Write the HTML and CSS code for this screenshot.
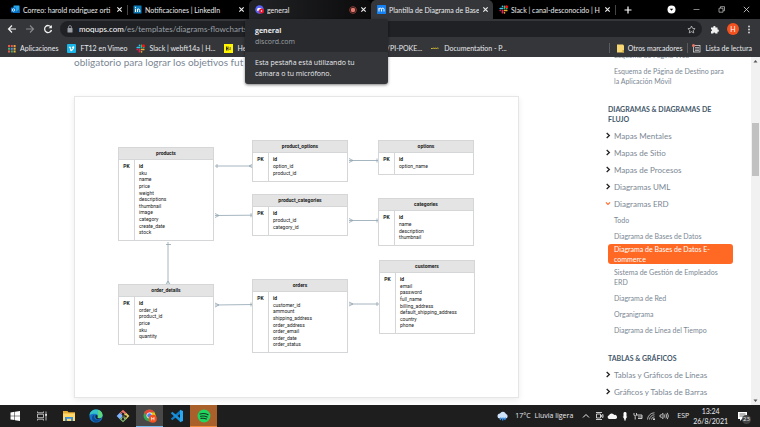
FILE: index.html
```html
<!DOCTYPE html>
<html lang="es">
<head>
<meta charset="utf-8">
<meta name="viewport" content="width=device-width, initial-scale=1">
<title>Plantilla de Diagrama de Bases de Datos</title>
<link rel="stylesheet" href="styles.css">
</head>
<body>
<svg class="defs" aria-hidden="true">
  <symbol id="slack" viewBox="0 0 18 18">
    <g fill="none" stroke-width="3.4" stroke-linecap="round">
      <path stroke="#36c5f0" d="M7 2.5v.1M2.5 7h4.5"/><path stroke="#2eb67d" d="M11 2.5V7M15.500 7h.1"/>
      <path stroke="#ecb22e" d="M11 15.500v.1M11 11h4.500"/><path stroke="#e01e5a" d="M7 11v4.500M2.500 11h.1"/>
    </g>
    <circle cx="15" cy="3.500" r="3" fill="#f11"/>
  </symbol>
  <symbol id="close" viewBox="0 0 8 8"><path d="M1.500 1.500l5 5M6.500 1.500l-5 5" stroke="#eee" stroke-width="1.300" fill="none"/></symbol>
  <symbol id="right" viewBox="0 0 6 8"><path d="M1.500 1.200L4.500 4 1.500 6.800" stroke="#222" stroke-width="1.500" fill="none"/></symbol>
  <symbol id="down" viewBox="0 0 8 6"><path d="M1.200 1.500L4 4.200 6.800 1.500" stroke="#ff6a2b" stroke-width="1.500" fill="none"/></symbol>
</svg>

<header class="browser">
  <nav class="tabs" aria-label="Pestañas">
    <div class="tab">
      <svg class="fav" viewBox="0 0 18 18"><rect x="5" y="1" width="12" height="15" rx="1" fill="#28a8ea"/><path d="M5 8l6 5 6-5v8H5z" fill="#0f6cbd"/><rect x="0" y="5" width="10" height="10" rx="1" fill="#0078d4"/><circle cx="5" cy="10" r="2.500" fill="none" stroke="#fff" stroke-width="1.600"/></svg>
      <span class="tab-title">Correo: harold rodriguez orti</span>
      <button class="icon-btn" aria-label="Cerrar"><svg class="x"><use href="#close"/></svg></button>
    </div>
    <div class="tab split">
      <svg class="fav" viewBox="0 0 18 18"><rect x="1" y="1" width="16" height="16" rx="1" fill="#0a7bb8"/><path d="M5 7.500V14M9 14V7.500M9 11c0-4 4.500-4 4.500 0v3" stroke="#fff" stroke-width="2" fill="none"/><circle cx="5" cy="4.700" r="1.300" fill="#fff"/></svg>
      <span class="tab-title">Notificaciones | LinkedIn</span>
      <button class="icon-btn" aria-label="Cerrar"><svg class="x"><use href="#close"/></svg></button>
    </div>
    <div class="tab hover">
      <svg class="fav" viewBox="0 0 18 18"><circle cx="9" cy="9" r="8.500" fill="#5865f2"/><path d="M4 12c0-4 1-6 2.500-6h5C13 6 14 8 14 12l-3-1H7z" fill="#fff"/><circle cx="13" cy="12" r="5" fill="#e8142c"/><circle cx="13" cy="12" r="1.500" fill="#fff"/></svg>
      <span class="tab-title">general</span>
      <svg class="rec" viewBox="0 0 10 10"><circle cx="5" cy="5" r="4.200" fill="none" stroke="#a9473f"/><circle cx="5" cy="5" r="2.800" fill="#e5786d"/></svg>
      <button class="icon-btn" aria-label="Cerrar"><svg class="x"><use href="#close"/></svg></button>
    </div>
    <div class="tab active">
      <svg class="fav" viewBox="0 0 18 18"><rect width="18" height="18" rx="1" fill="#1681f2"/><path d="M4 13V6M4 8.500c0-3 5-3 5 0V13M9 8.500c0-3 5-3 5 0V13" fill="none" stroke="#fff" stroke-width="2"/></svg>
      <span class="tab-title">Plantilla de Diagrama de Base</span>
      <button class="icon-btn" aria-label="Cerrar"><svg class="x"><use href="#close"/></svg></button>
    </div>
    <div class="tab">
      <svg class="fav"><use href="#slack"/></svg>
      <span class="tab-title">Slack | canal-desconocido | H</span>
      <button class="icon-btn" aria-label="Cerrar"><svg class="x"><use href="#close"/></svg></button>
    </div>
    <button class="icon-btn new-tab split" aria-label="Nueva pestaña"><svg class="plus" viewBox="0 0 8 8"><path d="M4 .5v7M.5 4h7" stroke="#fff" stroke-width="1.200"/></svg></button>
    <div class="window-controls">
      <button class="icon-btn" aria-label="Buscar pestañas"><svg class="fav" viewBox="0 0 9 9"><circle cx="4.500" cy="4.500" r="4" fill="#fff"/><path d="M2.800 3.800h3.400L4.500 5.800z" fill="#000"/></svg></button>
      <button class="icon-btn" aria-label="Minimizar"><svg class="fav" viewBox="0 0 9 9"><path d="M1.500 4.500h6" stroke="#bbb" stroke-width=".7"/></svg></button>
      <button class="icon-btn" aria-label="Restaurar"><svg class="fav" viewBox="0 0 9 9"><path d="M2 3.200h4v4H2zM3.500 3V1.700h4v4H6.200" fill="none" stroke="#ccc" stroke-width=".7"/></svg></button>
      <button class="icon-btn" aria-label="Cerrar ventana"><svg class="fav" viewBox="0 0 9 9"><path d="M1.800 1.800l5.400 5.400M7.200 1.800L1.800 7.200" stroke="#ddd" stroke-width=".8"/></svg></button>
    </div>
  </nav>

  <div class="toolbar">
    <button class="icon-btn" aria-label="Atrás"><svg class="nav-icon" viewBox="0 0 10 10"><path d="M9 5H1.500M5 1.500L1.500 5 5 8.500" fill="none" stroke="#f1f1f1" stroke-width="1.200"/></svg></button>
    <button class="icon-btn" aria-label="Adelante"><svg class="nav-icon" viewBox="0 0 10 10"><path d="M1 5h7.500M5 1.500L8.500 5 5 8.500" fill="none" stroke="#898a8d" stroke-width="1.100"/></svg></button>
    <button class="icon-btn" aria-label="Recargar"><svg class="nav-icon" viewBox="0 0 10 10"><path d="M8 3A3.500 3.500 0 1 0 8.500 6" fill="none" stroke="#f1f1f1" stroke-width="1.300"/><path d="M8.900.9v3.300H5.600z" fill="#f1f1f1"/></svg></button>
    <div class="omnibox">
      <svg class="lock" viewBox="0 0 6 8"><rect x=".5" y="3" width="5" height="4.500" rx=".6" fill="#9aa0a6"/><path d="M1.600 3V2a1.400 1.400 0 0 1 2.800 0v1" fill="none" stroke="#9aa0a6" stroke-width=".8"/></svg>
      <span class="url"><span class="host">moqups.com</span>/es/templates/diagrams-flowcharts/</span>
      <button class="icon-btn" aria-label="Añadir a marcadores"><svg class="fav" viewBox="0 0 18 18"><path d="M9 2l2.200 4.700 5 .6-3.700 3.500 1 5L9 13.300l-4.500 2.500 1-5L1.800 7.300l5-.6z" fill="none" stroke="#ccc" stroke-width="1.500"/></svg></button>
    </div>
    <button class="icon-btn" aria-label="Extensiones"><svg class="fav" viewBox="0 0 18 18"><path d="M2 5h4.500a2.300 2.300 0 1 1 4.500 0h4v4a2.300 2.300 0 1 1 0 4.500V17h-4.500a2 2 0 0 0-4 0H2v-4.500a2 2 0 0 0 0-4z" fill="#f1f1f1"/></svg></button>
    <button class="avatar" aria-label="Perfil">H</button>
    <button class="icon-btn" aria-label="Menú"><svg class="dots" viewBox="0 0 4 9"><g fill="#ddd"><circle cx="2" cy="1.500" r=".9"/><circle cx="2" cy="4.500" r=".9"/><circle cx="2" cy="7.500" r=".9"/></g></svg></button>
  </div>

  <nav class="bookmarks" aria-label="Marcadores">
    <a href="#"><svg class="fav" viewBox="0 0 9 9"><g><path d="M1 1h2v2H1zM1 6.500h2v2H1z" fill="#e5574b"/><path d="M3.800 1h2v2h-2z" fill="#e5574b"/><path d="M6.600 1h2v2h-2z" fill="#e8a33d"/><path d="M1 3.800h2v2H1z" fill="#4caf6a"/><path d="M3.800 3.800h2v2h-2z" fill="#4a8df0"/><path d="M6.600 3.800h2v2h-2zM6.600 6.500h2v2h-2z" fill="#e5b93d"/><path d="M3.800 6.500h2v2h-2z" fill="#4caf6a"/></g></svg>Aplicaciones</a>
    <a href="#"><svg class="fav" viewBox="0 0 18 18"><rect width="18" height="18" rx="2" fill="#1ab7ea"/><path d="M3.500 6.500C5 5 6.500 4 7.300 6c.7 2 1 5 2 5s2-2 1.800-3c-.2-.8-1-.6-1.500-.3C10.500 4.500 14.500 3.500 14.500 6.500 14.500 9.500 10 14.500 8.300 14.500 6 14.500 6 7.500 5 7.300l-1 .4z" fill="#fff"/></svg>FT12 en Vimeo</a>
    <a href="#"><svg class="fav"><use href="#slack"/></svg>Slack | webft14a | H...</a>
    <a href="#"><svg class="fav" viewBox="0 0 18 18"><rect width="18" height="18" fill="#fff500"/><path d="M5 5v8M8 5v8M5 9h3M11 8h3M11 11h2" stroke="#222" stroke-width="1.800"/></svg>Henr</a>
    <a class="after-card" href="#">/PI-POKE...</a>
    <a href="#"><svg class="fav" viewBox="0 0 9 9"><path d="M.5 5V4l1 1 1-1.200 1 1.200 1-1.200 1 1.200 1-1.200 1 .6" fill="none" stroke="#cdb72e" stroke-width="1"/></svg>Documentation - P...</a>
    <div class="bookmarks-end">
      <a class="ruled" href="#"><svg class="folder" viewBox="0 0 7 9"><path d="M0 .5h6l1 1v7H0z" fill="#f7d774"/><path d="M5.500 6H7v2.500H5.500z" fill="#c9a23a"/></svg>Otros marcadores</a>
      <a class="ruled" href="#"><svg class="fav" viewBox="0 0 18 18"><rect x="3" y="3" width="13" height="13" fill="none" stroke="#ddd" stroke-width="1.500"/><path d="M6 7h8M6 10h8M6 13h8" stroke="#ddd" stroke-width="1.300"/><circle cx="3" cy="3" r="3" fill="#ee7468"/></svg>Lista de lectura</a>
    </div>
  </nav>

  <aside class="tab-card">
    <div class="tab-card-head"><strong>general</strong><span>discord.com</span></div>
    <p>Esta pestaña está utilizando tu<br>cámara o tu micrófono.</p>
  </aside>
</header>

<div class="page">
  <main>
    <p class="lead">obligatorio para lograr los objetivos fut</p>
    <div class="card">
      <div class="plane">
        <svg class="links" viewBox="0 0 445 301" aria-hidden="true">
          <g fill="none" stroke="#8fa3b0" stroke-width=".8">
            <path d="M140 69H178M142 67v4M178 67l-4 2 4 2"/>
            <path d="M140 118.500L178 118.200M140 116.500l4 2-4 2M176 116.200v4"/>
            <path d="M274 63.500H304M274 61.500l4 2-4 2M302 61.500v4"/>
            <path d="M274 123.500H304M274 121.500l4 2-4 2M302 121.500v4"/>
            <path d="M93 145V188M91 147.500h5M90.500 188l2.500-4 2.500 4"/>
            <path d="M140 208L178 207.500M140 206l4 2-4 2M176 205.500v4"/>
            <path d="M274 207H304M274 205l4 2-4 2M302 205v4"/>
          </g>
        </svg>
        <section class="entity products"><h3>products</h3><div class="rows"><b class="pk">PK</b><ul><li>id</li><li>sku</li><li>name</li><li>price</li><li>weight</li><li>descriptions</li><li>thumbnail</li><li>image</li><li>category</li><li>create_date</li><li>stock</li></ul></div></section>
        <section class="entity product-options"><h3>product_options</h3><div class="rows"><b class="pk">PK</b><ul><li>id</li><li>option_id</li><li>product_id</li></ul></div></section>
        <section class="entity options"><h3>options</h3><div class="rows"><b class="pk">PK</b><ul><li>id</li><li>option_name</li></ul></div></section>
        <section class="entity product-categories"><h3>product_categories</h3><div class="rows"><b class="pk">PK</b><ul><li>id</li><li>product_id</li><li>category_id</li></ul></div></section>
        <section class="entity categories"><h3>categories</h3><div class="rows"><b class="pk">PK</b><ul><li>id</li><li>name</li><li>description</li><li>thumbnail</li></ul></div></section>
        <section class="entity order-details"><h3>order_details</h3><div class="rows"><b class="pk">PK</b><ul><li>id</li><li>order_id</li><li>product_id</li><li>price</li><li>sku</li><li>quantity</li></ul></div></section>
        <section class="entity orders"><h3>orders</h3><div class="rows"><b class="pk">PK</b><ul><li>id</li><li>customer_id</li><li>ammount</li><li>shipping_address</li><li>order_address</li><li>order_email</li><li>order_date</li><li>order_status</li></ul></div></section>
        <section class="entity customers"><h3>customers</h3><div class="rows"><b class="pk">PK</b><ul><li>id</li><li>email</li><li>password</li><li>full_name</li><li>billing_address</li><li>default_shipping_address</li><li>country</li><li>phone</li></ul></div></section>
      </div>
    </div>
  </main>

  <nav class="sidebar" aria-label="Plantillas">
    <div class="sub"><a href="#">Esquema de Página Web</a><a href="#">Esquema de Página de Destino para la Aplicación Móvil</a></div>
    <h2>Diagramas &amp; Diagramas de Flujo</h2>
    <a class="group" href="#"><svg class="chev"><use href="#right"/></svg>Mapas Mentales</a>
    <a class="group" href="#"><svg class="chev"><use href="#right"/></svg>Mapas de Sitio</a>
    <a class="group" href="#"><svg class="chev"><use href="#right"/></svg>Mapas de Procesos</a>
    <a class="group" href="#"><svg class="chev"><use href="#right"/></svg>Diagramas UML</a>
    <a class="group" href="#"><svg class="chev"><use href="#down"/></svg>Diagramas ERD</a>
    <div class="sub">
      <a href="#">Todo</a>
      <a href="#">Diagrama de Bases de Datos</a>
      <a class="current" href="#" aria-current="page">Diagrama de Bases de Datos E-<br>commerce</a>
      <a href="#">Sistema de Gestión de Empleados ERD</a>
      <a href="#">Diagrama de Red</a>
      <a href="#">Organigrama</a>
      <a href="#">Diagrama de Línea del Tiempo</a>
    </div>
    <h2>Tablas &amp; Gráficos</h2>
    <a class="group" href="#"><svg class="chev"><use href="#right"/></svg>Tablas y Gráficos de Líneas</a>
    <a class="group" href="#"><svg class="chev"><use href="#right"/></svg>Gráficos y Tablas de Barras</a>
    <a class="group" href="#"><svg class="chev"><use href="#right"/></svg>Gráficos y Tablas de Área</a>
  </nav>

  <div class="scrollbar" aria-hidden="true">
    <svg class="arrow" viewBox="0 0 9 9"><path d="M2.500 5.500h4L4.500 3z" fill="#555"/></svg>
    <div class="thumb"></div>
    <svg class="arrow" viewBox="0 0 9 9"><path d="M2.500 3.500h4L4.500 6z" fill="#555"/></svg>
  </div>
</div>

<footer class="taskbar">
  <div class="apps">
    <button aria-label="Inicio"><svg viewBox="0 0 14 14"><path d="M2.500 3.400l4-.6v3.900h-4zM7 2.700l5-.7v4.700H7zM2.500 7.200h4v3.900l-4-.6zM7 7.200h5V12l-5-.8z" fill="#fff"/></svg></button>
    <button aria-label="Vista de tareas"><svg viewBox="0 0 14 14"><path d="M2.500 2.500v1.300h6V2.500M2.500 11.500v-1.300h6v1.300M2.500 5.200h6v3.500h-6zM11 2.500v9" fill="none" stroke="#ddd" stroke-width=".8"/><path d="M10.300 5h1.500v1.800h-1.500z" fill="#fff"/></svg></button>
    <button aria-label="Explorador"><svg viewBox="0 0 14 14"><path d="M1 2h4.500l1 1.200H13V12H1z" fill="#e8ae32"/><path d="M1 4.500h12V12H1z" fill="#ffd868"/><path d="M3 12V8h8v4H9V9.800H5V12z" fill="#3b8ed8"/></svg></button>
    <button aria-label="Edge"><svg viewBox="0 0 14 14"><circle cx="7" cy="7" r="6.600" fill="#1674c8"/><path d="M.5 6.500C1-1 12.500-1.500 13.500 6c.2 3-3 4-5 2.800 1.200-2.800-.7-4-2.500-4S1.500 5 .5 6.500z" fill="#35c1c9"/><path d="M9 1c3 .7 4.700 3 4.500 5.500-.5 2.500-3.500 3.200-5 2.300C9.700 6 9 4 9 1z" fill="#5ed67c"/><path d="M5.500 6C4 9 6.500 12 11.500 10.500 9 14.500 3 13.500 3 9c0-2 1-3.500 2.500-3z" fill="#0c4a91"/><path d="M6.600 6.200c1.600-.6 2.400.8 1.700 2.300.7 1 3 1.300 4.400.5-2 2.500-7.500 1.500-6.100-2.800z" fill="#1d2229"/></svg></button>
    <button aria-label="Git"><svg viewBox="0 0 14 14"><g transform="rotate(45 7 7)"><path d="M2.500 2.500H7V7H2.500z" fill="#f0726a"/><path d="M7 2.500h4.500V7H7z" fill="#e8cf62"/><path d="M2.500 7H7v4.500H2.500z" fill="#80b3ff"/><path d="M7 7h4.500v4.500H7z" fill="#8bc77a"/></g><path d="M5.500 3l1.500 2v5.500M7 5.500l2.500 2" stroke="#222" fill="none"/><g fill="#222"><circle cx="7" cy="5" r="1.200"/><circle cx="7" cy="10.300" r="1.200"/><circle cx="9.600" cy="7.400" r="1.200"/></g></svg></button>
    <button class="focused" aria-label="Chrome"><svg viewBox="0 0 14 14"><circle cx="6.500" cy="6.500" r="6" fill="#34a853"/><path d="M1.300 3.500a6 6 0 0 1 10.400 0H6.500L4 8z" fill="#ea4335"/><path d="M11.700 3.500A6 6 0 0 1 6.500 12.500L9 8l-2.500-4.500z" fill="#fbbc05"/><circle cx="6.500" cy="6.500" r="2.700" fill="#4285f4" stroke="#fff" stroke-width=".8"/><circle cx="9.800" cy="9.700" r="4" fill="#f4511e"/><path d="M8.600 8v3.400M11 8v3.400M8.600 9.700H11" stroke="#fff" stroke-width=".7"/></svg></button>
    <button aria-label="Visual Studio Code"><svg viewBox="0 0 14 14"><path d="M10 .7l3 1.400v9.800l-3 1.400z" fill="#29a9f2"/><path d="M10 1.200v3.800L2.300 11.200.8 9.800z" fill="#0d7dc9"/><path d="M10 12.800V9L2.300 2.800.8 4.200z" fill="#1b91dc"/></svg></button>
    <button class="alert" aria-label="Spotify"><svg viewBox="0 0 14 14"><circle cx="7" cy="7" r="6.400" fill="#1ed760"/><path d="M3 5c2.700-.8 5.600-.5 8 .8M3.500 7.300c2.300-.6 4.600-.4 6.700.7M3.900 9.400c2-.4 3.800-.3 5.500.6" fill="none" stroke="#18351f" stroke-width="1.100" stroke-linecap="round"/></svg></button>
  </div>
  <div class="tray">
    <svg class="weather" viewBox="0 0 12 10"><path d="M3 7.500a2.500 2.500 0 0 1 0-5 3.300 3.300 0 0 1 6 .6 2.300 2.300 0 0 1 0 4.400z" fill="#cfe4fa"/><path d="M4 6.500l-.8 2.500M6.300 6.500l-.8 3M8.500 6.500L7.700 9" stroke="#3494ee" stroke-width="1.300"/></svg>
    <span class="temp">17°C</span><span>Lluvia ligera</span>
    <div class="tray-icons">
      <svg viewBox="0 0 10 10"><path d="M2 6.500l3-3 3 3" fill="none" stroke="#eee"/></svg>
      <svg viewBox="0 0 10 10"><path d="M2.500 3h4v4h-4zM6.500 5L9 3.500v3zM2 1.500h6M2 8.500h6" fill="none" stroke="#ddd" stroke-width=".9"/></svg>
      <svg viewBox="0 0 10 10"><path d="M2 8a2 2 0 0 1 0-3.800 3 3 0 0 1 5.300-.2A2 2 0 0 1 8.500 8z" fill="#f4f4f4"/></svg>
      <svg viewBox="0 0 10 10"><rect x="3.500" y="1" width="3" height="5.500" rx="1.400" fill="#fff"/><path d="M2.700 5.500h4.600L5.700 8v1.500H4.300V8z" fill="#fff"/></svg>
      <svg viewBox="0 0 10 10"><path d="M3.500 4H9v3.500H5M1 2v2a1.300 1.300 0 0 0 2.500 0V2M2.200 5.500v3M6 4.800v2M8 4.800v2" fill="none" stroke="#ddd" stroke-width=".9"/></svg>
      <svg viewBox="0 0 10 10"><path d="M1.500 8.500A7 7 0 0 1 8.500 1.800M3.500 8.500a5 5 0 0 1 5-4.700M5.500 8.500a3 3 0 0 1 3-2.700" fill="none" stroke="#bbb" stroke-width=".9"/><circle cx="8" cy="8.200" r=".9" fill="#fff"/></svg>
      <svg viewBox="0 0 10 10"><path d="M1 4h1.200L4 2.300v5.400L2.200 6H1zM5.400 3.500q1.100 1.500 0 3M6.900 2.600q1.800 2.400 0 4.800M8.300 1.800q2.200 3.200 0 6.400" fill="none" stroke="#ddd" stroke-width=".8"/></svg>
    </div>
    <span class="lang">ESP</span>
    <time class="clock" datetime="2021-08-26T13:24">13:24<br>26/8/2021</time>
    <button class="notices" aria-label="Notificaciones"><svg viewBox="0 0 11 11"><path d="M1 1h9v7H5l-2 2V8H1z" fill="#fff"/><path d="M2.500 3h6M2.500 5h6" stroke="#333" stroke-width=".7"/></svg><span class="count">23</span></button>
  </div>
</footer>
</body>
</html>
```
FILE: styles.css
```css
* { box-sizing: border-box; }

body {
  margin: 0;
  height: 100vh;
  display: flex;
  flex-direction: column;
  overflow: hidden;
  background: #fff;
  font: 7px/10px Lato, "Noto Sans", sans-serif;
  color: #e8eaed;
}

.defs { position: absolute; width: 0; height: 0; }
h2, h3, p, ul { margin: 0; padding: 0; }
ul { list-style: none; }
a { color: inherit; text-decoration: none; }
svg { display: block; flex: none; }
button { padding: 0; border: 0; background: none; color: inherit; font: inherit; }
.icon-btn { display: flex; align-items: center; justify-content: center; }

.fav { width: 9px; height: 9px; }
.x { width: 7px; height: 7px; }
.rec { width: 8px; height: 8px; }
.plus { width: 8px; height: 8px; }
.nav-icon { width: 10px; height: 10px; }
.lock { width: 6px; height: 8px; }
.dots { width: 4px; height: 9px; }
.folder { width: 7px; height: 9px; }

/* Browser frame */
.browser { position: relative; flex: none; background: #35363a; }

.tabs { display: flex; height: 19px; padding-left: 5px; background: #000; }
.tab {
  flex: 0 1 122px;
  min-width: 0;
  display: flex;
  align-items: center;
  gap: 3px;
  padding: 0 4px 0 6px;
}
.tab-title { flex: 1; min-width: 0; overflow: hidden; white-space: nowrap; }
.split { background: linear-gradient(#444, #444) left center / 1px 10px no-repeat; }
.tab.hover { background: linear-gradient(90deg, #222326, #0b0b0c); border-radius: 5px 5px 0 0; }
.tab.active { background: #35363a; border-radius: 5px 5px 0 0; }
.new-tab { width: 26px; }
.window-controls { display: flex; align-items: center; gap: 16px; margin-left: auto; padding-right: 9px; }

.toolbar { display: flex; align-items: center; gap: 8px; height: 20px; padding: 0 9px 0 7px; }
.omnibox {
  flex: 1;
  display: flex;
  align-items: center;
  gap: 6px;
  height: 16px;
  margin-left: -1px;
  padding: 0 6px 0 7px;
  border-radius: 8px;
  background: #202124;
}
.url { flex: 1; font-size: 8px; color: #9aa0a6; }
.host { color: #fff; }
.avatar { width: 12px; height: 12px; border-radius: 50%; background: #f4511e; color: #fff; line-height: 12px; text-align: center; }

.bookmarks { display: flex; align-items: center; gap: 9px; height: 18px; padding: 0 8px 0 7px; white-space: nowrap; }
.bookmarks a { display: flex; align-items: center; gap: 4px; }
.bookmarks .after-card { margin-left: 125px; }
.bookmarks-end { display: flex; margin-left: auto; }
.bookmarks-end .ruled { padding-left: 7px; border-left: 1px solid #5a5b5e; }
.bookmarks-end .ruled + .ruled { margin-left: 5px; padding-left: 4px; }

.tab-card {
  position: absolute;
  z-index: 2;
  top: 19px;
  left: 245px;
  width: 143px;
  border-radius: 3px;
  overflow: hidden;
  background: #35363a;
  box-shadow: 0 1px 3px rgba(0, 0, 0, .5);
  font-family: "Open Sans", sans-serif;
}
.tab-card-head { display: flex; flex-direction: column; padding: 6px 10px 5px; background: #292a2d; line-height: 11px; }
.tab-card-head span { color: #9aa0a6; }
.tab-card p { padding: 5px 10px; line-height: 11px; }

/* Page */
.page { flex: 1; min-height: 0; display: flex; color: #7b8794; }
main { flex: 1; min-width: 0; padding-left: 74px; }
.lead { overflow: hidden; height: 39px; font-size: 10px; line-height: 10px; }
.card { display: flex; justify-content: center; border: 1px solid #e6e6e6; box-shadow: 0 2px 6px rgba(0, 0, 0, .08); }
.plane { position: relative; flex: none; width: 443px; height: 300px; }
.links { position: absolute; inset: 0; width: 445px; height: 301px; }

.entity {
  position: absolute;
  display: flex;
  flex-direction: column;
  width: 96px;
  border: 1px solid #d4d6d7;
  background: #fff;
  color: #222;
  font: 5px/6px Roboto, sans-serif;
}
.entity h3 { flex: none; height: 12px; border-bottom: 1px solid #d4d6d7; background: #e4e4e4; font-size: 5px; line-height: 10px; text-align: center; }
.rows { flex: 1; display: grid; grid-template-columns: 16px 1fr; }
.pk { padding-top: 3px; border-right: 1px solid #d4d6d7; text-align: center; }
.entity ul { display: grid; grid-auto-rows: 1fr; padding: 3px 4px 4px; }
.entity li:first-child { font-weight: 700; }

.products { left: 43px; top: 50px; height: 94px; }
.product-options { left: 177px; top: 43px; height: 42px; }
.options { left: 303px; top: 43px; height: 35px; }
.product-categories { left: 177px; top: 97px; height: 42px; }
.categories { left: 303px; top: 101px; height: 48px; }
.order-details { left: 43px; top: 187px; height: 61px; }
.orders { left: 177px; top: 182px; height: 74px; }
.customers { left: 304px; top: 163px; height: 74px; }

.sidebar { flex: none; width: 129px; margin: -10px 18px 0 85px; padding-left: 4px; overflow: hidden; clip-path: inset(10px 0 0 0); }
.sidebar h2 { margin: 15px 0 3px; color: #44586a; font-size: 7px; line-height: 10px; text-transform: uppercase; }
.sub a { display: block; padding: 3px 6px; border-radius: 3px; line-height: 10px; }
.sub .current { padding-block: 0; background: #ff6924; color: #fff; }
.group { display: flex; align-items: center; height: 17px; font-size: 8px; white-space: nowrap; }
.chev { width: 6px; height: 7px; margin-left: -3px; margin-right: 3px; }

.scrollbar { flex: none; display: flex; flex-direction: column; width: 9px; background: #f1f1f1; }
.arrow { width: 9px; height: 9px; }
.thumb { width: 7px; height: 53px; margin: 57px 1px auto; background: #c1c1c1; }

/* Taskbar */
.taskbar { flex: none; display: flex; justify-content: space-between; height: 22px; background: #1e1e1e; }
.apps { display: flex; padding-left: 1px; }
.apps button { display: flex; align-items: center; justify-content: center; width: 27px; }
.apps svg { width: 14px; height: 14px; }
.apps .focused { background: #484848; box-shadow: inset 0 -1px #76b9ed; }
.apps .alert { background: #a9602a; box-shadow: inset 0 -1px #f08a3a; }
.tray { display: flex; align-items: center; font-family: "Open Sans", sans-serif; }
.weather { width: 12px; height: 10px; margin-right: 6px; }
.temp { margin-right: 4px; }
.tray-icons { display: flex; gap: 3px; margin: 0 8px; }
.tray-icons svg { width: 10px; height: 10px; }
.clock { margin: 0 9px 0 4px; font-family: Lato, sans-serif; text-align: center; }
.notices { position: relative; margin-right: 12px; }
.notices svg { width: 11px; height: 11px; }
.count { position: absolute; left: 5px; top: 4px; width: 9px; height: 9px; border-radius: 50%; background: #444; font-size: 6px; line-height: 9px; text-align: center; }
```
